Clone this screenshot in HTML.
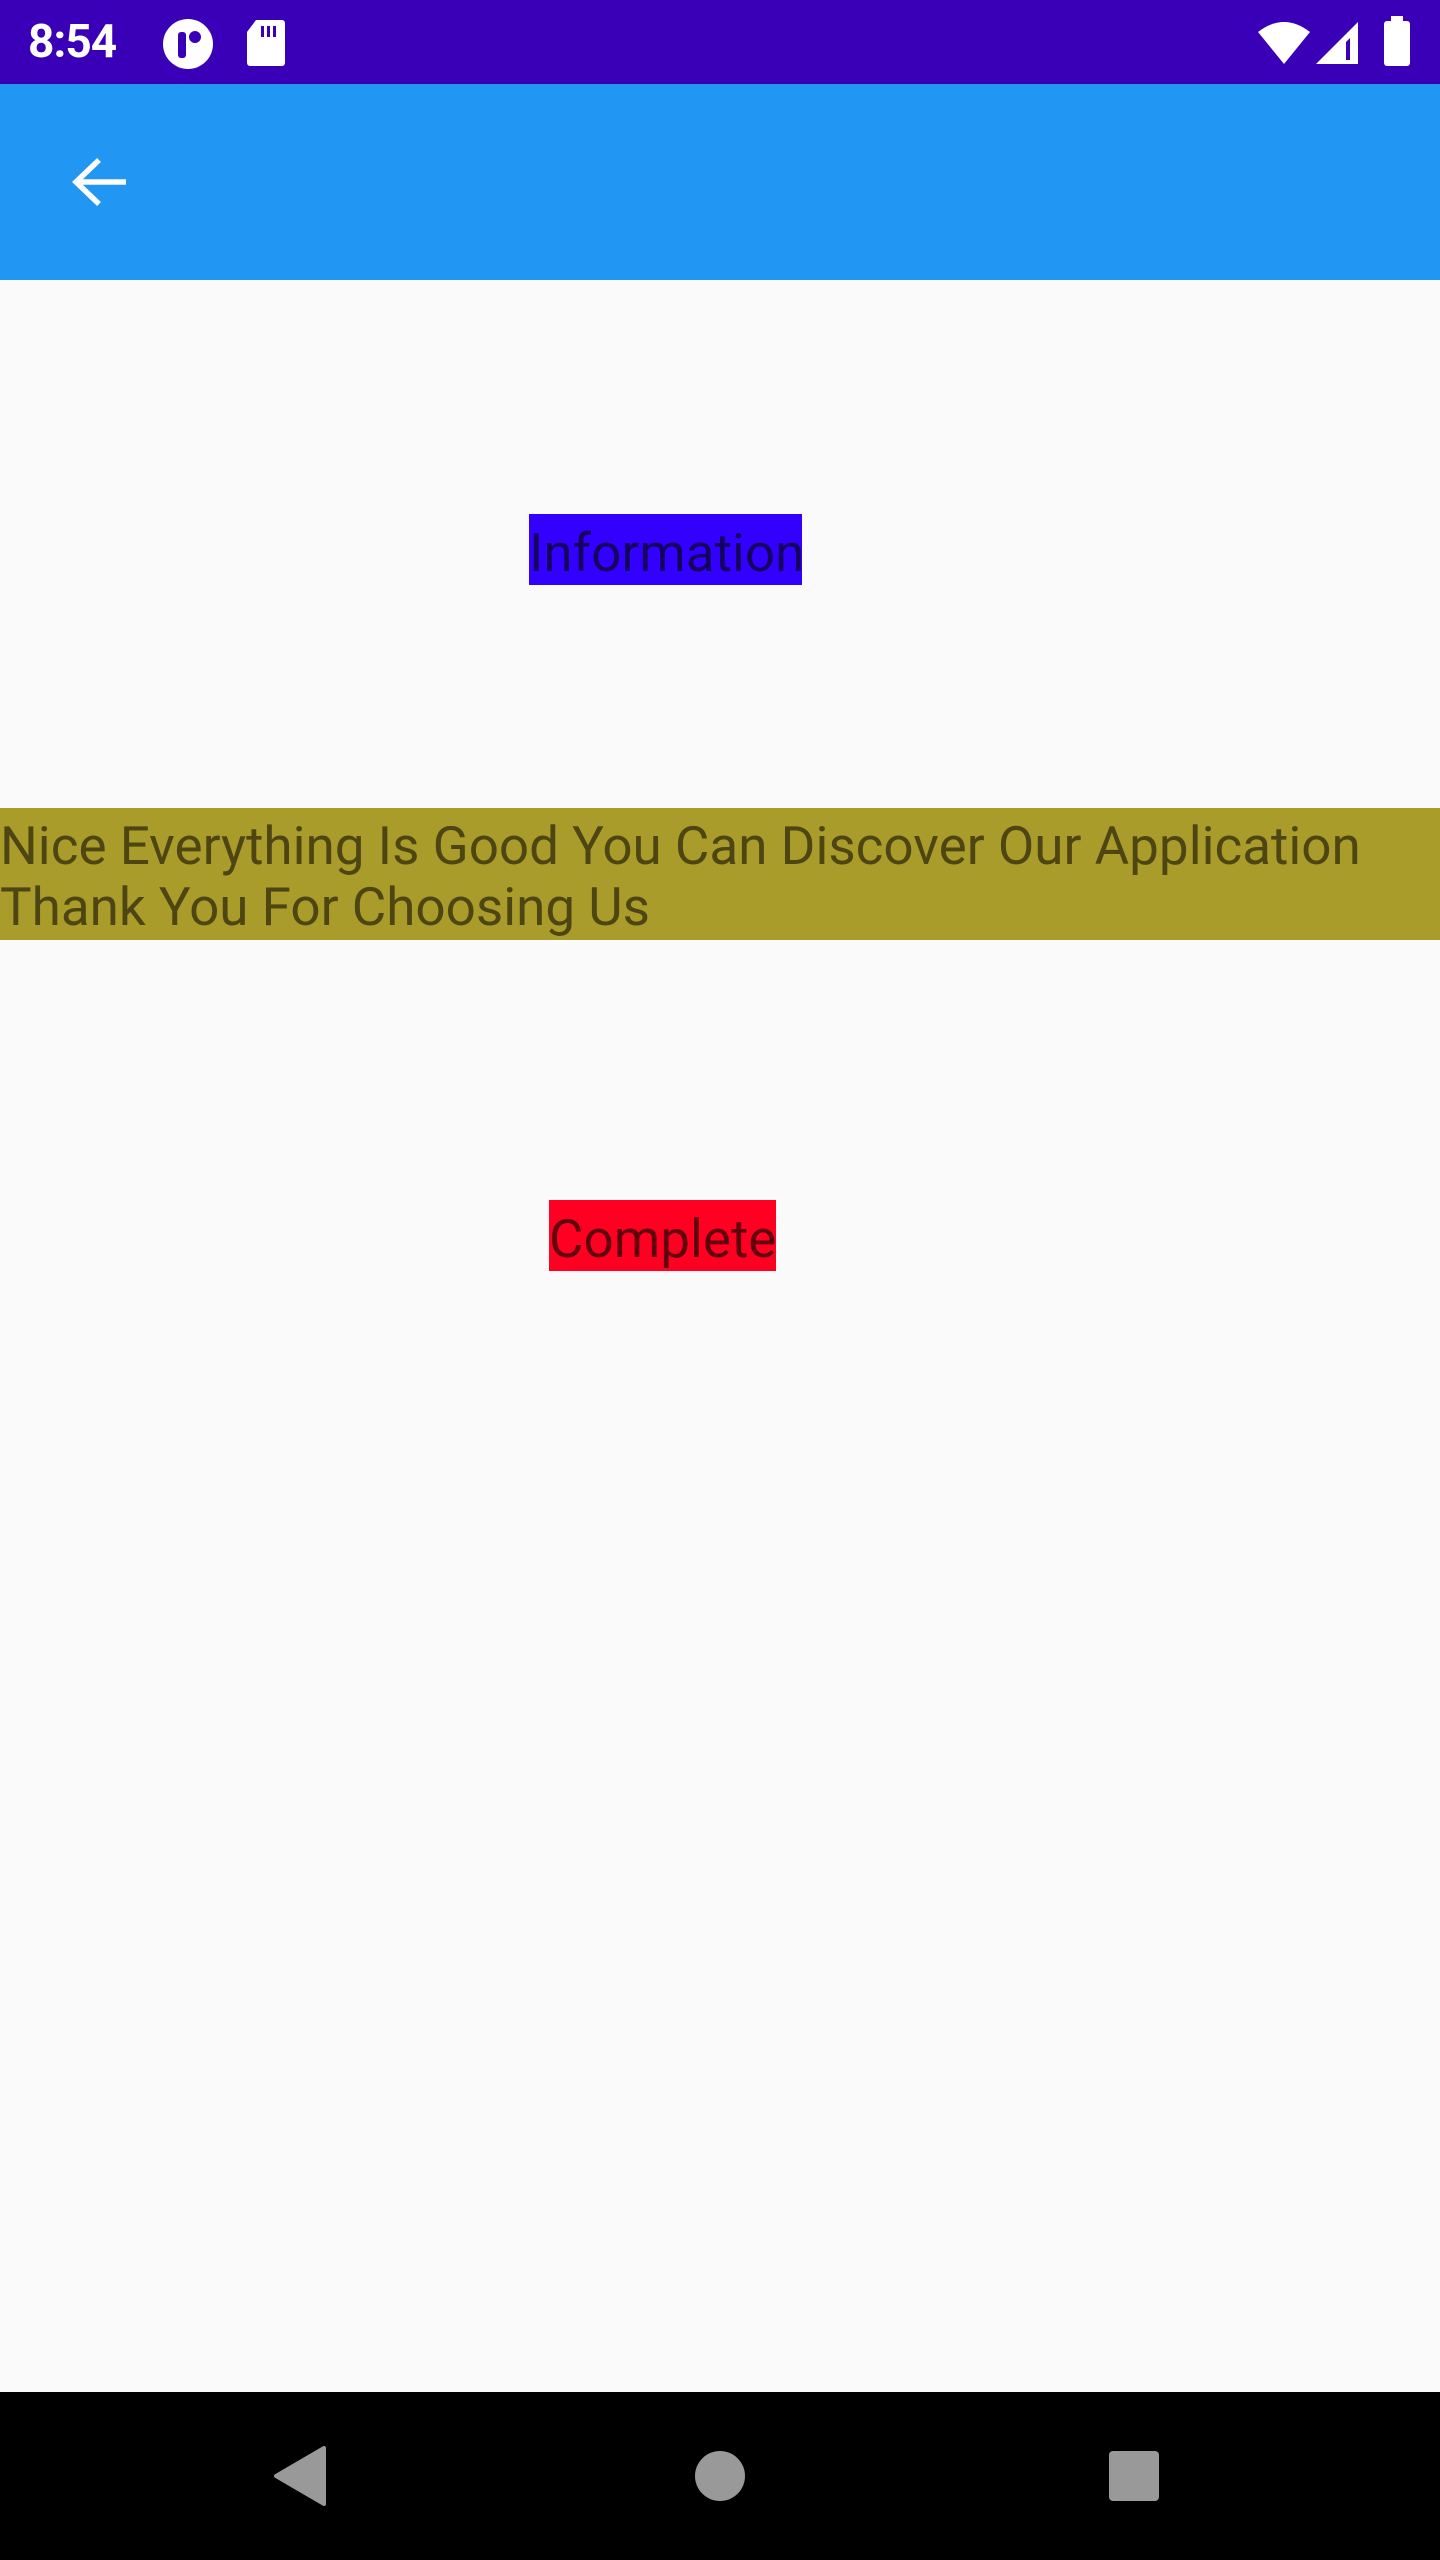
<!DOCTYPE html>
<html><head><meta charset="utf-8"><style>
html,body{margin:0;padding:0}
body{width:1440px;height:2560px;background:#fafafa;position:relative;overflow:hidden;font-family:"Roboto","Liberation Sans",sans-serif}
.abs{position:absolute}
.status{left:0;top:0;width:1440px;height:84px;background:#3a00b7}
.appbar{left:0;top:84px;width:1440px;height:196px;background:#2196f2}
.box{color:rgba(0,0,0,0.62);font-size:53px;line-height:70px;padding-top:4px;box-sizing:border-box;text-align:center;white-space:nowrap;overflow:hidden}
.band{left:0;top:808px;width:1440px;height:132px;box-sizing:border-box;padding-top:8px;background:#aa9c2a;color:rgba(0,0,0,0.55);font-size:53px;line-height:61px;white-space:nowrap}
.nav{left:0;top:2392px;width:1440px;height:168px;background:#000}
</style></head><body>
<div class="abs status">
  <div class="abs" style="left:28px;top:14px;color:#fff;font-size:46px;line-height:56px;font-weight:bold;letter-spacing:-1px">8:54</div>
  <svg class="abs" style="left:160px;top:16px" width="56" height="56" viewBox="0 0 56 56"><circle cx="28" cy="28" r="25" fill="#fff"/><rect x="18" y="16" width="8" height="26" rx="3" fill="#3a00b7"/><circle cx="35" cy="21" r="6" fill="#3a00b7"/></svg>
  <svg class="abs" style="left:246px;top:18px" width="40" height="48" viewBox="0 0 40 48"><path d="M10 2H36a3 3 0 0 1 3 3V45a3 3 0 0 1-3 3H4a3 3 0 0 1-3-3V14z" fill="#fff"/><rect x="15" y="8" width="3" height="11" fill="#3a00b7"/><rect x="21" y="8" width="3" height="11" fill="#3a00b7"/><rect x="27" y="8" width="3" height="11" fill="#3a00b7"/></svg>
  <svg class="abs" style="left:1256px;top:20px" width="56" height="46" viewBox="0 0 56 46"><path d="M28 44L2 12Q28-8 54 12Z" fill="#fff"/></svg>
  <svg class="abs" style="left:1314px;top:20px" width="46" height="46" viewBox="0 0 46 46"><path d="M44 2V44H2Z" fill="#fff"/><path d="M36 18V40H32V22Z" fill="#3a00b7"/></svg>
  <svg class="abs" style="left:1382px;top:16px" width="30" height="50" viewBox="0 0 30 50"><rect x="9" y="0" width="12" height="6" fill="#fff"/><rect x="2" y="5" width="26" height="45" rx="3" fill="#fff"/></svg>
</div>
<div class="abs appbar">
  <svg class="abs" style="left:66px;top:70px" width="60" height="60" viewBox="0 0 60 60"><path d="M60 28H12M33 6L10 28L33 50" stroke="#fff" stroke-width="5.5" fill="none"/></svg>
</div>
<div class="abs box" style="left:529px;top:514px;width:273px;height:71px;background:#3300ff">Information</div>
<div class="abs band">Nice Everything Is Good You Can Discover Our Application<br>Thank You For Choosing Us</div>
<div class="abs box" style="left:549px;top:1200px;width:227px;height:71px;background:#ff0022">Complete</div>
<div class="abs nav">
  <svg class="abs" style="left:272px;top:54px" width="56" height="60" viewBox="0 0 56 60"><path d="M52 2V58L4 30Z" fill="#999" stroke="#999" stroke-width="4" stroke-linejoin="round"/></svg>
  <svg class="abs" style="left:694px;top:58px" width="52" height="52"><circle cx="26" cy="26" r="25" fill="#999"/></svg>
  <svg class="abs" style="left:1108px;top:58px" width="52" height="52"><rect x="1" y="1" width="50" height="50" rx="4" fill="#999"/></svg>
</div>
</body></html>
